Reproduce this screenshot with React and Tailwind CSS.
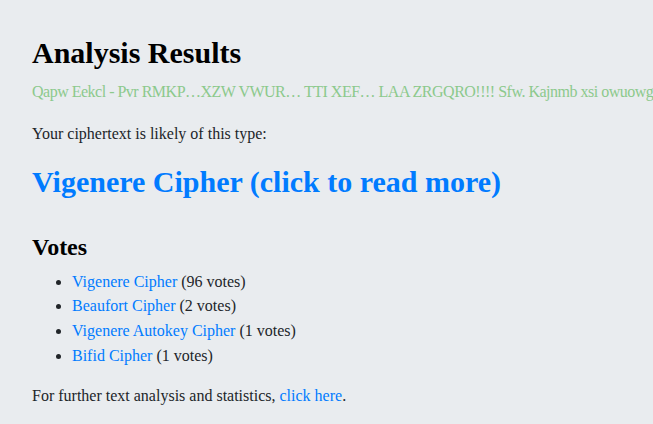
const votes = [
  { name: "Vigenere Cipher", count: 96 },
  { name: "Beaufort Cipher", count: 2 },
  { name: "Vigenere Autokey Cipher", count: 1 },
  { name: "Bifid Cipher", count: 1 },
];

export default function App() {
  return (
    <main className="min-h-screen overflow-hidden bg-[#e9ecef] px-8 pt-[35px] font-['Liberation_Serif',serif] text-[16px] text-[#212529]">
      <h1 className="text-[30px] font-bold leading-[36px] text-black">
        Analysis Results
      </h1>
      <p className="mt-[9px] whitespace-nowrap leading-6 tracking-[-0.5px] text-[#8cc98c]">
        Qapw Eekcl - Pvr RMKP…XZW VWUR… TTI XEF… LAA ZRGQRO!!!! Sfw. Kajnmb
        xsi owuowge
      </p>
      <p className="mt-[18px] leading-6">Your ciphertext is likely of this type:</p>
      <a
        className="mt-[18px] block text-[30px] font-bold leading-[36px] text-[#007bff]"
        href="#"
      >
        Vigenere Cipher (click to read more)
      </a>
      <h2 className="mt-[32px] text-[24px] font-bold leading-[30px] text-black">
        Votes
      </h2>
      <ul className="mt-[7.5px] list-disc pl-10 leading-[24.8px]">
        {votes.map((vote) => (
          <li key={vote.name}>
            <a className="text-[#007bff]" href="#">
              {vote.name}
            </a>{" "}
            ({vote.count} votes)
          </li>
        ))}
      </ul>
      <p className="mt-[15.5px] leading-6">
        For further text analysis and statistics,{" "}
        <a className="text-[#007bff]" href="#">
          click here
        </a>
        .
      </p>
    </main>
  );
}
